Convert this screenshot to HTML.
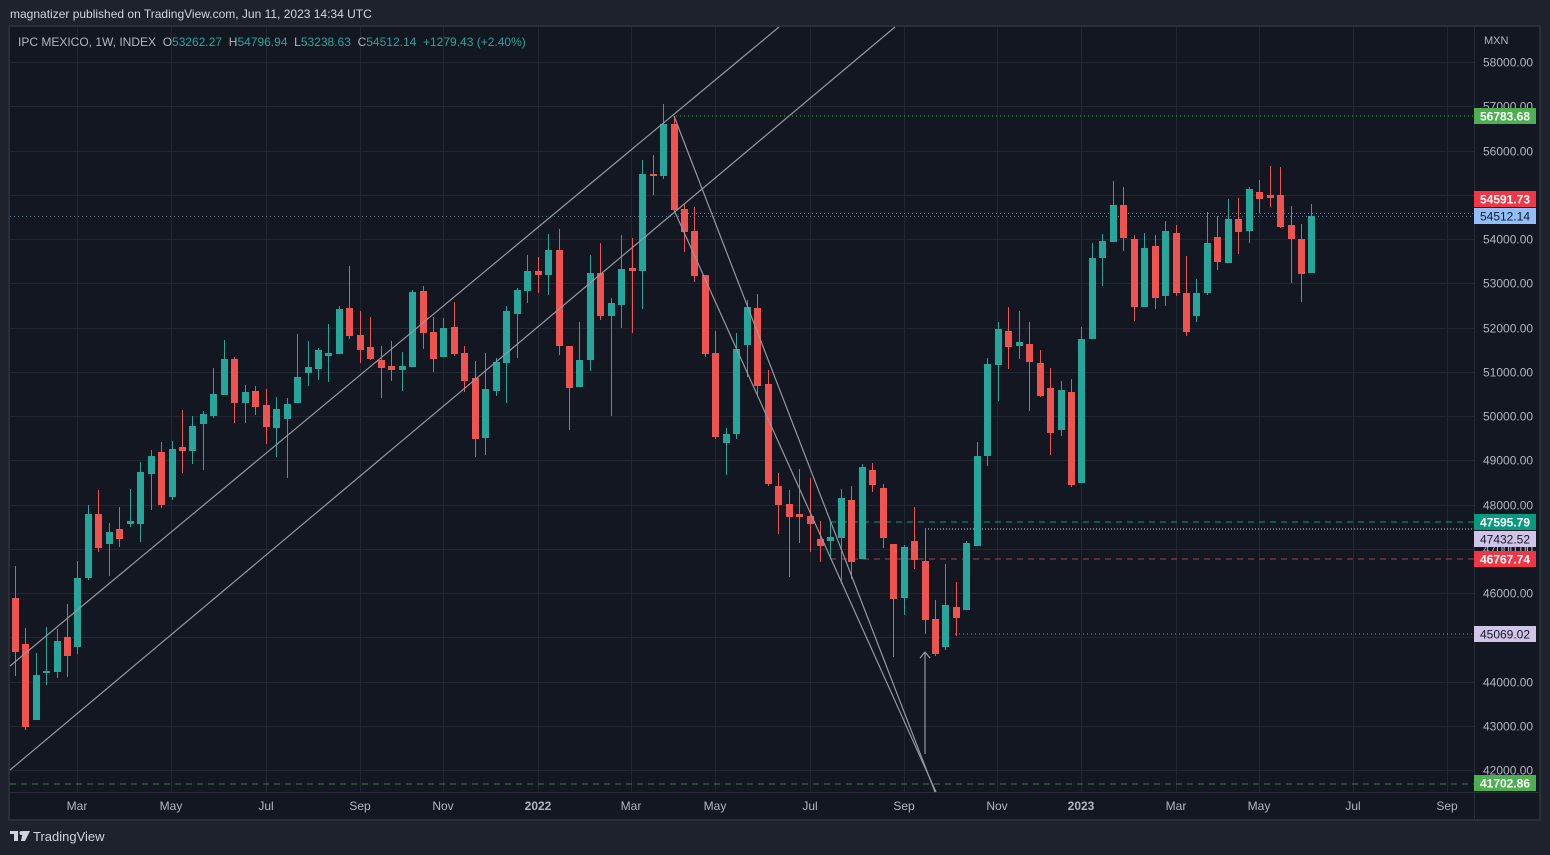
<!DOCTYPE html>
<html><head><meta charset="utf-8"><style>
html,body{margin:0;padding:0;background:#1e222d;width:1550px;height:855px;overflow:hidden;font-family:"Liberation Sans",sans-serif;}
#hdr{position:absolute;left:10px;top:7px;color:#d1d4dc;font-size:12px;}
#logo{position:absolute;left:33px;top:829px;color:#d1d4dc;font-size:13px;}
svg{position:absolute;left:0;top:0}
</style></head><body>
<svg id="s" width="1550" height="855" xmlns="http://www.w3.org/2000/svg" font-family="Liberation Sans, sans-serif">
<rect x="9" y="26" width="1531" height="794" fill="#131722" stroke="#2a2e39" stroke-width="2"/>
<g id="grid" stroke="#232733" stroke-width="1"></g>
<line x1="1474.5" y1="27" x2="1474.5" y2="819" stroke="#2a2e39"/>
<line x1="10" y1="792.5" x2="1540" y2="792.5" stroke="#2a2e39"/>
<g id="hl"></g>
<g id="c"></g>
<g stroke="#9598a1" stroke-width="1.2" fill="none">
<line x1="10" y1="666" x2="779" y2="27"/>
<line x1="10" y1="770" x2="895" y2="27"/>
<line x1="674" y1="116" x2="935" y2="792"/>
<line x1="674" y1="210" x2="936" y2="792"/>
<line x1="925" y1="754" x2="925" y2="652"/>
<polyline points="920,658 925,652 930,658"/>
</g>
<g id="ax" font-size="12" fill="#b2b5be"></g>
<g font-size="12" fill="#b2b5be" text-anchor="middle" id="tx"></g>
<g font-size="12" font-weight="bold" text-anchor="middle">
<rect x="1474" y="108" width="62" height="16" fill="#4caf50"/><text x="1505" y="120.5" fill="#fff">56783.68</text>
<rect x="1474" y="191" width="62" height="16" fill="#f23645"/><text x="1505" y="203.5" fill="#fff">54591.73</text>
<rect x="1474" y="208" width="62" height="16" fill="#90bff9"/><text x="1505" y="220.5" fill="#131722" font-weight="normal">54512.14</text>
<rect x="1474" y="514" width="62" height="16" fill="#089981"/><text x="1505" y="526.5" fill="#fff">47595.79</text>
<rect x="1474" y="531" width="62" height="16" fill="#d1c4e9"/><text x="1505" y="543.5" fill="#131722" font-weight="normal">47432.52</text>
<rect x="1474" y="551" width="62" height="16" fill="#f23645"/><text x="1505" y="563.5" fill="#fff">46767.74</text>
<rect x="1474" y="626" width="62" height="16" fill="#d1c4e9"/><text x="1505" y="638.5" fill="#131722" font-weight="normal">45069.02</text>
<rect x="1474" y="775" width="62" height="16" fill="#4caf50"/><text x="1505" y="787.5" fill="#fff">41702.86</text>
</g>
<text x="1484" y="44" font-size="11" fill="#b2b5be">MXN</text>
<text x="18" y="46" font-size="12" fill="#b2b5be" style="white-space:pre">IPC MEXICO, 1W, INDEX  O<tspan fill="#26a69a">53262.27</tspan>  H<tspan fill="#26a69a">54796.94</tspan>  L<tspan fill="#26a69a">53238.63</tspan>  C<tspan fill="#26a69a">54512.14</tspan>  <tspan fill="#26a69a">+1279.43 (+2.40%)</tspan></text>
<g fill="#d1d4dc"><rect x="10" y="831" width="8" height="3"/><rect x="14" y="831" width="4" height="10"/><circle cx="21.5" cy="833" r="2"/><polygon points="23,831 30,831 25,841 21,841"/></g>
</svg>
<div id="hdr">magnatizer published on TradingView.com, Jun 11, 2023 14:34 UTC</div>
<div id="logo">TradingView</div>
<script>
const NS="http://www.w3.org/2000/svg";
function el(p,t,a,txt){const e=document.createElementNS(NS,t);for(const k in a)e.setAttribute(k,a[k]);if(txt)e.textContent=txt;document.getElementById(p).appendChild(e);}
const Y=p=>62+(58000-p)*0.04425;
for(let p=42000;p<=58000;p+=1000){const y=Math.round(Y(p))+0.5;el('grid','line',{x1:10,y1:y,x2:1474,y2:y});
 el('ax','text',{x:1483,y:y+4},p+'.00');}
const M=[["Mar",77],["May",171],["Jul",266],["Sep",360],["Nov",443],["2022",538],["Mar",631],["May",715],["Jul",810],["Sep",904],["Nov",997],["2023",1081],["Mar",1176],["May",1259],["Jul",1353],["Sep",1447]];
M.forEach(m=>{el('grid','line',{x1:m[1]+.5,y1:27,x2:m[1]+.5,y2:792});const a={x:m[1],y:810};if(/^20/.test(m[0]))a['font-weight']='bold';el('tx','text',a,m[0]);});
[[676,116,"#4caf50","1 3"],[680,213.5,"#f23645","1 3"],[10,216.5,"#5d7a99","1 3"],[830,522,"#089981","6 5"],[925,529,"#d1d4dc","1 2"],[830,559,"#a8404a","6 5"],[955,634,"#9598a1","1 3"],[10,784,"#3f7a4a","6 5"]].forEach(h=>el('hl','line',{x1:h[0],y1:h[1],x2:1474,y2:h[1],stroke:h[2],'stroke-dasharray':h[3]}));
const D=[
[15,598,652,566,676,0],[25,644,727,628,730,0],[36,675,720,653,720,1],[46,671,673,627,685,1],[57,641,672,629,678,1],[67,637,656,604,677,0],[77,578,647,561,654,1],[88,514,578,505,580,1],[98,514,548,490,552,0],[109,532,544,523,576,1],[119,529,539,507,547,0],[130,521,524,489,527,1],[140,472,524,462,542,1],[151,456,474,450,510,1],[161,452,505,442,508,0],[172,449,497,441,500,1],[182,447,451,410,473,0],[192,426,451,416,464,1],[203,414,424,411,470,1],[213,394,416,368,418,1],[224,359,395,340,395,1],[234,359,403,357,423,0],[245,392,403,385,423,1],[255,391,407,386,415,0],[266,405,427,389,444,0],[276,409,428,397,457,1],[287,404,419,398,478,1],[297,377,403,334,403,1],[308,367,373,341,386,1],[318,350,369,348,380,1],[328,353,356,324,382,1],
[339,309,354,306,354,1],[349,308,336,266,339,0],[360,335,350,311,363,0],[370,347,359,317,360,0],[381,360,368,346,398,0],[391,366,370,341,381,0],[402,366,370,352,391,1],[412,292,367,290,367,1],[423,291,333,286,349,0],[433,332,359,317,372,0],[443,328,357,318,357,1],[454,327,354,302,356,0],[464,353,381,346,392,0],[475,378,439,361,457,0],[485,389,438,353,455,1],[496,362,391,358,396,1],[506,311,363,306,403,1],[517,290,314,288,358,1],[527,271,291,255,303,1],[538,271,275,257,293,0],[548,250,275,234,295,1],[559,250,346,229,355,0],[569,346,388,346,430,0],[579,360,387,322,387,1],[590,273,360,255,371,1],[600,273,316,243,320,0],[611,303,316,298,416,1],[621,269,305,235,328,1],[632,268,271,238,333,0],[642,174,271,160,309,1],
[653,174,176,155,195,0],[663,124,176,104,179,1],[674,124,210,116,210,0],[684,209,232,204,252,0],[694,231,276,207,282,0],[705,275,354,275,357,0],[715,353,437,331,439,0],[726,434,443,428,475,1],[736,349,434,333,439,1],[747,307,345,300,377,1],[757,308,386,294,395,0],[768,384,484,370,486,0],[778,486,505,473,534,0],[789,504,517,490,577,0],[799,514,517,469,543,0],[810,516,524,478,552,0],[820,539,546,521,562,0],[830,537,541,522,559,1],[841,498,538,489,584,1],[851,500,562,486,579,0],[862,467,559,464,559,1],[872,470,485,463,492,0],[883,488,538,484,548,0],[893,544,599,544,657,0],[904,547,598,545,615,1],[914,541,560,507,569,0],[925,561,620,529,634,0],[935,619,654,600,656,0],[945,605,647,564,650,1],[956,607,618,582,636,0],[966,543,610,541,610,1],[977,456,546,442,546,1],
[987,364,456,358,466,1],[998,329,365,322,401,1],[1008,331,347,307,369,0],[1019,342,346,311,359,1],[1029,344,362,322,411,0],[1040,363,396,350,397,0],[1050,388,433,368,455,0],[1061,390,430,381,436,1],[1071,392,485,379,487,0],[1081,339,483,327,483,1],[1092,258,339,243,339,1],[1102,241,258,234,286,1],[1113,205,242,181,242,1],[1123,205,238,187,251,0],[1134,239,307,235,321,0],[1144,248,307,233,307,1],[1155,246,298,235,309,0],[1165,231,296,221,306,1],[1176,233,293,225,296,0],[1186,293,332,256,336,0],[1196,293,316,279,322,1],[1207,243,293,212,295,1],[1217,237,262,216,270,0],[1228,219,263,199,263,1],[1238,219,232,198,254,0],[1249,189,231,187,243,1],[1259,192,199,180,213,0],[1270,195,198,166,207,0],[1280,195,227,167,228,0],[1291,225,239,206,283,0],[1301,239,274,224,302,0],[1311,216,273,204,273,1]];
D.forEach(d=>{const c=d[5]?"#26a69a":"#ef5350";const x=Math.round(d[0]);
 el('c','rect',{x:x,y:d[3],width:1,height:Math.max(1,d[4]-d[3]),fill:c});
 el('c','rect',{x:x-3,y:d[1],width:7,height:Math.max(2,d[2]-d[1]),fill:c});});
</script>
</body></html>
